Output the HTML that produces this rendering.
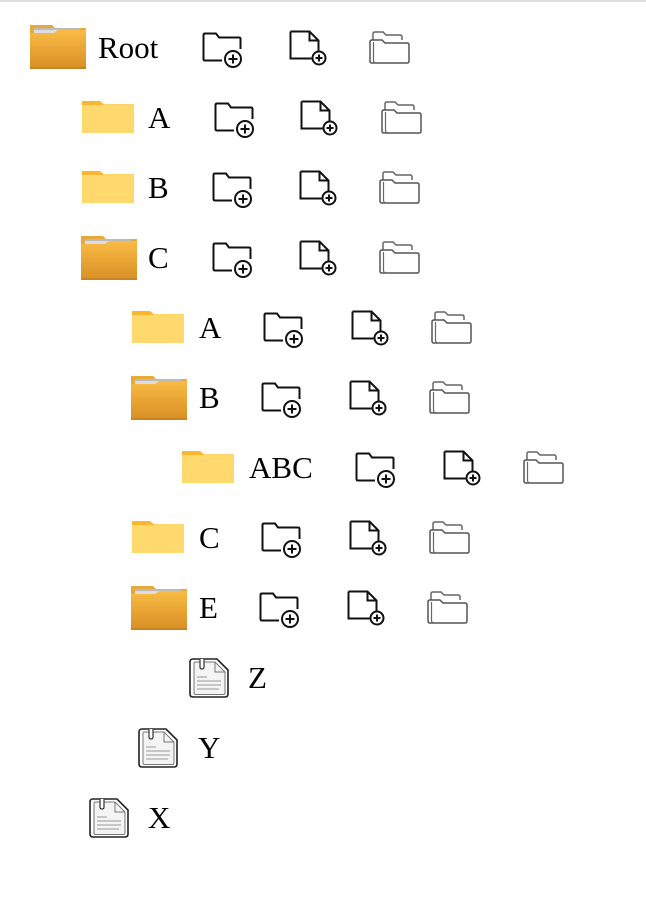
<!DOCTYPE html>
<html><head><meta charset="utf-8"><style>
body{margin:0;width:646px;height:918px;background:#fff;position:relative;overflow:hidden;font-family:"Liberation Serif",serif}
.top{position:absolute;left:0;top:0;width:646px;height:2px;background:#ddd}
svg,span{position:absolute}
span{font-size:31px;line-height:31px;color:#000}
</style></head><body>
<div class="top"></div>
<svg width="0" height="0" style="position:absolute">
<defs>
<linearGradient id="og" x1="0" y1="0" x2="0" y2="1"><stop offset="0" stop-color="#f9bc45"/><stop offset="1" stop-color="#d98f25"/></linearGradient>
<symbol id="open" viewBox="0 0 60 50"><path d="M2 4 h22 l3 3 h31 v40 h-56z" fill="#e9a83a"/><rect x="6" y="7" width="46" height="6" fill="#bbb"/><rect x="6" y="9" width="46" height="3" fill="#ddd"/><path d="M2 12 h24 l4-3 h28 v38 h-56z" fill="url(#og)"/><rect x="2" y="46" width="56" height="2" fill="#c88322"/></symbol>
<symbol id="closed" viewBox="0 0 54 34"><path d="M1 1 h18 l4 3 h30 v29 h-52z" fill="#fed46c"/><path d="M1 1 h18 l4 4 h-22z" fill="#fbb52f"/><rect x="1" y="5" width="52" height="28" fill="#ffd96e"/></symbol>
<symbol id="nf" viewBox="0 0 44 36"><path d="M1.5 10 V3 q0-1.5 1.5-1.5 h11 l3 4 h20 q1.5 0 1.5 1.5 v10 M1.5 10 v17 q0 1.5 1.5 1.5 h17" fill="none" stroke="#111" stroke-width="2"/><circle cx="31" cy="27" r="8" fill="#fff" stroke="#111" stroke-width="2"/><path d="M26.5 27h9M31 22.5v9" stroke="#111" stroke-width="2"/></symbol>
<symbol id="nd" viewBox="0 0 40 36"><path d="M1.5 1.5 h19 l9 9 v12 M20.5 1.5 v9 h9 M1.5 1.5 v27 h21" fill="none" stroke="#111" stroke-width="2"/><circle cx="30" cy="28" r="6.5" fill="#fff" stroke="#111" stroke-width="2"/><path d="M26.5 28h7M30 24.5v7" stroke="#111" stroke-width="2"/></symbol>
<symbol id="cp" viewBox="0 0 42 36"><path d="M4 10 V4 q0-2 2-2 h8 l3 3 h14 q2 0 2 2 v3" fill="none" stroke="#666" stroke-width="1.5"/><path d="M3 33 q-2 0-2-2 V12 q0-2 2-2 h10 l3 3 h22 q2 0 2 2 v16 q0 2-2 2 z" fill="#fff" stroke="#555" stroke-width="1.5"/><path d="M7 33 q-2.5 0-2.5-3 V12" fill="none" stroke="#666" stroke-width="1.2"/></symbol>
<symbol id="doc" viewBox="0 0 42 42"><path d="M5 2 h24 l11 11 v24 q0 3-3 3 h-32 q-3 0-3-3 v-32 q0-3 3-3z" fill="#fff" stroke="#222" stroke-width="1.6"/><path d="M7 5 h20 l10 10 v21 q0 1.5-1.5 1.5 h-28 q-1.5 0-1.5-1.5 v-29.5 q0-1.5 1.5-1.5z" fill="#f4f4f4" stroke="#777" stroke-width="1"/><path d="M27 5 v10 h10" fill="none" stroke="#777"/><path d="M12 2 v8 q0 2 2 2 q2 0 2-2 v-8" fill="#fff" stroke="#333" stroke-width="1.2"/><path d="M9 20h10M9 24h24M9 28h24M9 32h22" stroke="#999" stroke-width="1"/></symbol>
</defs></svg>

<svg style="left:28px;top:21px" width="60" height="50"><use href="#open" width="60" height="50"/></svg><span style="left:98px;top:32px">Root</span>
<svg style="left:202px;top:32px" width="44" height="36"><use href="#nf" width="44" height="36"/></svg>
<svg style="left:289px;top:30px" width="40" height="36"><use href="#nd" width="40" height="36"/></svg>
<svg style="left:369px;top:30px" width="42" height="36"><use href="#cp" width="42" height="36"/></svg>

<svg style="left:81px;top:100px" width="54" height="34"><use href="#closed" width="54" height="34"/></svg><span style="left:148px;top:102px">A</span>
<svg style="left:214px;top:102px" width="44" height="36"><use href="#nf" width="44" height="36"/></svg>
<svg style="left:300px;top:100px" width="40" height="36"><use href="#nd" width="40" height="36"/></svg>
<svg style="left:381px;top:100px" width="42" height="36"><use href="#cp" width="42" height="36"/></svg>

<svg style="left:81px;top:170px" width="54" height="34"><use href="#closed" width="54" height="34"/></svg><span style="left:148px;top:172px">B</span>
<svg style="left:212px;top:172px" width="44" height="36"><use href="#nf" width="44" height="36"/></svg>
<svg style="left:299px;top:170px" width="40" height="36"><use href="#nd" width="40" height="36"/></svg>
<svg style="left:379px;top:170px" width="42" height="36"><use href="#cp" width="42" height="36"/></svg>

<svg style="left:79px;top:232px" width="60" height="50"><use href="#open" width="60" height="50"/></svg><span style="left:148px;top:242px">C</span>
<svg style="left:212px;top:242px" width="44" height="36"><use href="#nf" width="44" height="36"/></svg>
<svg style="left:299px;top:240px" width="40" height="36"><use href="#nd" width="40" height="36"/></svg>
<svg style="left:379px;top:240px" width="42" height="36"><use href="#cp" width="42" height="36"/></svg>

<svg style="left:131px;top:310px" width="54" height="34"><use href="#closed" width="54" height="34"/></svg><span style="left:199px;top:312px">A</span>
<svg style="left:263px;top:312px" width="44" height="36"><use href="#nf" width="44" height="36"/></svg>
<svg style="left:351px;top:310px" width="40" height="36"><use href="#nd" width="40" height="36"/></svg>
<svg style="left:431px;top:310px" width="42" height="36"><use href="#cp" width="42" height="36"/></svg>

<svg style="left:129px;top:372px" width="60" height="50"><use href="#open" width="60" height="50"/></svg><span style="left:199px;top:382px">B</span>
<svg style="left:261px;top:382px" width="44" height="36"><use href="#nf" width="44" height="36"/></svg>
<svg style="left:349px;top:380px" width="40" height="36"><use href="#nd" width="40" height="36"/></svg>
<svg style="left:429px;top:380px" width="42" height="36"><use href="#cp" width="42" height="36"/></svg>

<svg style="left:181px;top:450px" width="54" height="34"><use href="#closed" width="54" height="34"/></svg><span style="left:249px;top:452px">ABC</span>
<svg style="left:355px;top:452px" width="44" height="36"><use href="#nf" width="44" height="36"/></svg>
<svg style="left:443px;top:450px" width="40" height="36"><use href="#nd" width="40" height="36"/></svg>
<svg style="left:523px;top:450px" width="42" height="36"><use href="#cp" width="42" height="36"/></svg>

<svg style="left:131px;top:520px" width="54" height="34"><use href="#closed" width="54" height="34"/></svg><span style="left:199px;top:522px">C</span>
<svg style="left:261px;top:522px" width="44" height="36"><use href="#nf" width="44" height="36"/></svg>
<svg style="left:349px;top:520px" width="40" height="36"><use href="#nd" width="40" height="36"/></svg>
<svg style="left:429px;top:520px" width="42" height="36"><use href="#cp" width="42" height="36"/></svg>

<svg style="left:129px;top:582px" width="60" height="50"><use href="#open" width="60" height="50"/></svg><span style="left:199px;top:592px">E</span>
<svg style="left:259px;top:592px" width="44" height="36"><use href="#nf" width="44" height="36"/></svg>
<svg style="left:347px;top:590px" width="40" height="36"><use href="#nd" width="40" height="36"/></svg>
<svg style="left:427px;top:590px" width="42" height="36"><use href="#cp" width="42" height="36"/></svg>

<svg style="left:188px;top:657px" width="42" height="42"><use href="#doc" width="42" height="42"/></svg><span style="left:248px;top:662px">Z</span>
<svg style="left:137px;top:727px" width="42" height="42"><use href="#doc" width="42" height="42"/></svg><span style="left:198px;top:732px">Y</span>
<svg style="left:88px;top:797px" width="42" height="42"><use href="#doc" width="42" height="42"/></svg><span style="left:148px;top:802px">X</span>
</body></html>
